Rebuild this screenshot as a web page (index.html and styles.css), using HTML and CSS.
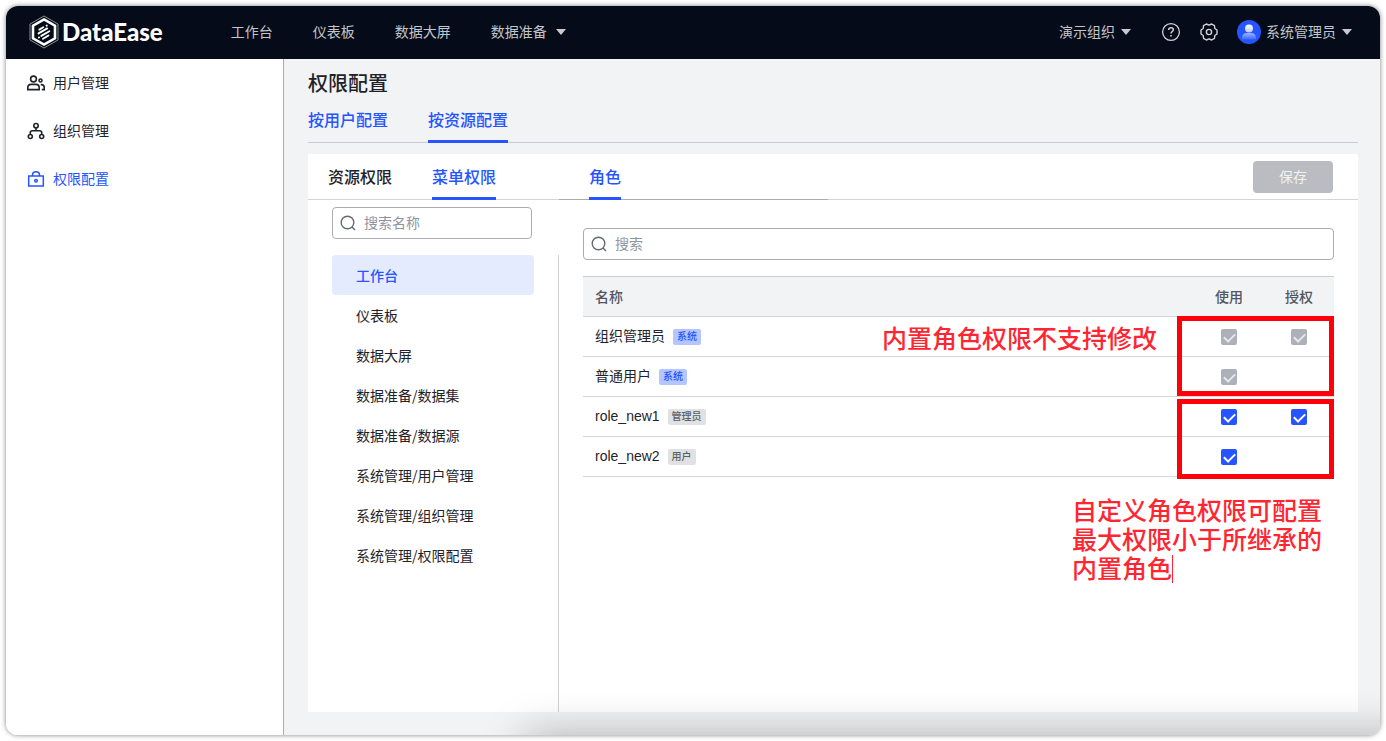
FILE: index.html
```html
<!DOCTYPE html>
<html lang="zh-CN">
<head>
<meta charset="utf-8">
<meta name="viewport" content="width=device-width, initial-scale=1">
<title>DataEase - 权限配置</title>
<link rel="stylesheet" href="styles.css">
</head>
<body>
<div class="window">
  <header class="topbar">
    <a class="logo" href="#">
      <svg width="30" height="34" viewBox="0 0 30 34" fill="none" aria-hidden="true">
        <path d="M15 1 29 9v16L15 33 1 25V9z" stroke="#8b8f98" stroke-width="1"/>
        <path d="M15 4.400 26 10.700v12.600L15 29.600 4 23.300V10.700z" stroke="#fff" stroke-width="2.600"/>
        <path d="m10.300 14.600 4-2.300M17.600 10.700l.2-.1M9.600 18.400l8.600-5M12.300 20.900l8-4.600M9.900 22.500l.2-.1M14 23.700l5.500-3.200" stroke="#fff" stroke-width="1.900" stroke-linecap="round"/>
      </svg>
      <span>DataEase</span>
    </a>
    <nav class="mainnav">
      <a href="#">工作台</a>
      <a href="#">仪表板</a>
      <a href="#">数据大屏</a>
      <a href="#">数据准备<i class="caret"></i></a>
    </nav>
    <div class="tools">
      <button class="org" type="button">演示组织<i class="caret"></i></button>
      <button class="tool" type="button" aria-label="帮助">
        <svg width="20" height="20" viewBox="0 0 20 20" fill="none" stroke="#d0d2d6" stroke-width="1.300">
          <circle cx="10" cy="10" r="8.400"/>
          <path d="M7.700 8c0-1.400 1-2.200 2.300-2.200s2.300.8 2.300 2c0 1.700-2.300 1.800-2.300 3.700" stroke-width="1.500"/>
          <path d="M10 12.900v1.500" stroke-width="1.600"/>
        </svg>
      </button>
      <button class="tool" type="button" aria-label="设置">
        <svg width="20" height="20" viewBox="0 0 20 20" fill="none" stroke="#d0d2d6" stroke-width="1.400" stroke-linejoin="round">
          <path d="M7.400 2 10 3.200 12.600 2l2.900 1.700.3 2.800L18 8v4l-2.200 1.500-.3 2.800-2.900 1.700-2.600-1.200L7.400 18l-2.900-1.700-.3-2.800L2 12V8l2.200-1.500.3-2.800z"/>
          <circle cx="10" cy="10" r="2.600"/>
        </svg>
      </button>
      <button class="user" type="button">
        <svg width="24" height="24" viewBox="0 0 24 24" aria-hidden="true">
          <defs>
            <linearGradient id="person" x1="0" y1="0" x2="0" y2="1"><stop offset="0" stop-color="#fff"/><stop offset="1" stop-color="#b9c8ff"/></linearGradient>
            <linearGradient id="body" x1="0" y1="0" x2="0" y2="1"><stop offset="0" stop-color="#9db3ff"/><stop offset="1" stop-color="#3d66ff"/></linearGradient>
          </defs>
          <circle cx="12" cy="12" r="12" fill="#2655ff"/>
          <path d="M5 19.500v-1.700c0-3 2-4.800 5-4.800h4c3 0 5 1.800 5 4.800v1.700z" fill="url(#body)"/>
          <circle cx="12" cy="8.500" r="4" fill="url(#person)"/>
        </svg>
        系统管理员<i class="caret"></i>
      </button>
    </div>
  </header>

  <div class="layout">
    <aside class="sidebar">
      <a href="#">
        <svg width="20" height="20" viewBox="0 0 20 20" fill="none" stroke="#1f2329" stroke-width="1.600">
          <circle cx="7.500" cy="6" r="2.900"/>
          <path d="M1.800 16.600v-1.800c0-2 1.400-3.400 3.400-3.400h4.600c2 0 3.400 1.400 3.400 3.400v1.800zM14.700 11.600h.7c1.700 0 2.800 1 2.800 2.800v2.200h-2.400"/>
          <circle cx="14.500" cy="7.500" r="1.500"/>
        </svg>
        用户管理
      </a>
      <a href="#">
        <svg width="20" height="20" viewBox="0 0 20 20" fill="none" stroke="#1f2329" stroke-width="1.600">
          <circle cx="10" cy="4.700" r="2.200"/>
          <circle cx="4.300" cy="15.500" r="2"/>
          <circle cx="15.700" cy="15.500" r="2"/>
          <path d="M10 7v2.800M4.300 13.500v-1.700c0-1.200.8-2 2-2h7.400c1.200 0 2 .8 2 2v1.700"/>
        </svg>
        组织管理
      </a>
      <a class="current" href="#">
        <svg width="20" height="20" viewBox="0 0 20 20" fill="none" stroke="#2655ff" stroke-width="1.500">
          <rect x="2.700" y="7" width="14.600" height="10"/>
          <path d="M6.500 7V6C6.500 4 8 2.700 10 2.700S13.500 4 13.500 6V7"/>
          <circle cx="10" cy="11.800" r="1.300"/>
        </svg>
        权限配置
      </a>
    </aside>

    <main class="content">
      <h1>权限配置</h1>
      <nav class="tabs page-tabs">
        <a href="#">按用户配置</a>
        <a class="active" href="#">按资源配置</a>
      </nav>

      <section class="panel">
        <div class="panel-head">
          <nav class="tabs kind-tabs">
            <a class="plain" href="#">资源权限</a>
            <a class="active" href="#">菜单权限</a>
          </nav>
          <nav class="tabs role-tabs">
            <a class="active" href="#">角色</a>
          </nav>
          <button class="save" type="button" disabled>保存</button>
        </div>

        <div class="panel-body">
          <div class="resources">
            <label class="search">
              <svg width="18" height="18" viewBox="0 0 18 18" fill="none" stroke="#646a73" stroke-width="1.400"><circle cx="8.500" cy="8.500" r="6.300"/><path d="m13 13 3 3"/></svg>
              <input type="text" placeholder="搜索名称" aria-label="搜索名称">
            </label>
            <ul class="menu-list">
              <li class="selected">工作台</li>
              <li>仪表板</li>
              <li>数据大屏</li>
              <li>数据准备/数据集</li>
              <li>数据准备/数据源</li>
              <li>系统管理/用户管理</li>
              <li>系统管理/组织管理</li>
              <li>系统管理/权限配置</li>
            </ul>
          </div>

          <div class="roles">
            <label class="search">
              <svg width="18" height="18" viewBox="0 0 18 18" fill="none" stroke="#646a73" stroke-width="1.400"><circle cx="8.500" cy="8.500" r="6.300"/><path d="m13 13 3 3"/></svg>
              <input type="text" placeholder="搜索" aria-label="搜索">
            </label>
            <div class="table-area">
              <table>
                <thead>
                  <tr><th>名称</th><th class="check">使用</th><th class="check">授权</th></tr>
                </thead>
                <tbody>
                  <tr>
                    <td>组织管理员<span class="tag">系统</span></td>
                    <td class="check"><input type="checkbox" aria-label="组织管理员 使用" checked disabled></td>
                    <td class="check"><input type="checkbox" aria-label="组织管理员 授权" checked disabled></td>
                  </tr>
                  <tr>
                    <td>普通用户<span class="tag">系统</span></td>
                    <td class="check"><input type="checkbox" aria-label="普通用户 使用" checked disabled></td>
                    <td class="check"></td>
                  </tr>
                  <tr>
                    <td>role_new1<span class="tag custom">管理员</span></td>
                    <td class="check"><input type="checkbox" aria-label="role_new1 使用" checked></td>
                    <td class="check"><input type="checkbox" aria-label="role_new1 授权" checked></td>
                  </tr>
                  <tr>
                    <td>role_new2<span class="tag custom">用户</span></td>
                    <td class="check"><input type="checkbox" aria-label="role_new2 使用" checked></td>
                    <td class="check"></td>
                  </tr>
                </tbody>
              </table>
              <div class="mark mark-builtin"></div>
              <div class="mark mark-custom"></div>
              <p class="note note-builtin">内置角色权限不支持修改</p>
              <p class="note note-custom">自定义角色权限可配置<br>最大权限小于所继承的<br>内置角色<span class="cursor"></span></p>
            </div>
          </div>
        </div>
      </section>
    </main>
  </div>
</div>
</body>
</html>
```

FILE: styles.css
```css
* {
  box-sizing: border-box;
}

body {
  position: relative;
  margin: 0;
  padding: 6px;
  height: 100vh;
  background: #fff;
  color: #1f2329;
  font: 14px/22px "Liberation Sans", "Noto Sans CJK SC", sans-serif;
}

body::before {
  content: "";
  position: absolute;
  inset: 6px;
  border-radius: 12px;
  box-shadow: 0 0 5px rgba(0, 0, 0, 0.5);
}

a {
  color: inherit;
  text-decoration: none;
}

button {
  padding: 0;
  border: 0;
  background: none;
  color: inherit;
  font: inherit;
}

svg {
  display: block;
  flex: none;
}

.window {
  position: relative;
  display: flex;
  flex-direction: column;
  height: calc(100vh - 12px);
  border-radius: 12px;
  overflow: hidden;
  background: #f2f3f5;
}

/* soft shade along the bottom edge */
.window::after {
  content: "";
  position: absolute;
  left: 520px;
  right: -60px;
  top: 100%;
  height: 60px;
  box-shadow: 0 0 44px rgba(0, 0, 0, 0.28);
  pointer-events: none;
}

.topbar {
  display: flex;
  align-items: center;
  flex: none;
  height: 53px;
  padding: 0 28px 2px 23px;
  background: #050b18;
  color: #c2c5ca;
}

.logo {
  display: flex;
  align-items: center;
  gap: 3px;
  color: #fff;
  font: 900 24px/30px Lato, sans-serif;
}

.mainnav {
  display: flex;
  gap: 40px;
  margin-left: 68px;
}

.mainnav a,
.org,
.user {
  display: flex;
  align-items: center;
}

.caret {
  margin-left: 6px;
  border: 5px solid transparent;
  border-top: 6px solid #c8cacf;
  border-bottom: 0;
}

.mainnav .caret {
  margin-left: 9px;
}

.tools {
  display: flex;
  align-items: center;
  margin-left: auto;
}

.org {
  margin-right: 30px;
}

.tool {
  margin-right: 18px;
}

.user svg {
  margin-right: 5px;
}

.layout {
  display: flex;
  flex: 1;
  min-height: 0;
}

.sidebar {
  flex: none;
  width: 278px;
  border-right: 1px solid #a9acb3;
  background: #fff;
}

.sidebar a {
  display: flex;
  align-items: center;
  gap: 7px;
  height: 48px;
  padding-left: 20px;
}

.sidebar .current {
  color: #2655ff;
}

.content {
  display: flex;
  flex: 1;
  flex-direction: column;
  min-width: 0;
  padding: 12px 22px 23px 24px;
}

h1 {
  margin: 0;
  font-size: 20px;
  font-weight: 500;
  line-height: 26px;
}

.tabs {
  display: flex;
  gap: 40px;
  color: #2655ff;
  font-size: 16px;
  font-weight: 500;
}

.tabs a {
  display: block;
  padding-top: 2px;
  line-height: 44px;
}

.tabs .plain {
  color: #1f2329;
}

.tabs .active {
  box-shadow: inset 0 -3px #2655ff;
}

.page-tabs {
  box-shadow: inset 0 -1px #c9cbd0;
}

.panel {
  display: flex;
  flex: 1;
  flex-direction: column;
  margin-top: 11px;
  background: #fff;
}

.panel-head {
  display: flex;
  box-shadow: inset 0 -1px #d3d5d8;
}

.kind-tabs {
  flex: none;
  width: 251px;
  padding-left: 20px;
}

.role-tabs {
  width: 269px;
  padding-left: 30px;
  box-shadow: inset 0 -1px #a9acb0;
}

.save {
  width: 80px;
  height: 32px;
  margin: 7px 25px 0 auto;
  border-radius: 4px;
  background: #bbbcc1;
  color: #f0f1f2;
}

.panel-body {
  display: flex;
  flex: 1;
}

.resources {
  display: flex;
  flex: none;
  flex-direction: column;
  width: 251px;
  padding-top: 7px;
}

.search {
  display: flex;
  align-items: center;
  gap: 7px;
  height: 32px;
  padding-left: 6px;
  border: 1px solid #a9acb3;
  border-radius: 4px;
}

.search input {
  flex: 1;
  min-width: 0;
  padding: 0;
  border: 0;
  outline: 0;
  background: none;
  font: inherit;
}

.search input::placeholder {
  color: #8f959e;
}

.resources .search {
  width: 200px;
  margin-left: 24px;
}

.menu-list {
  flex: 1;
  margin: 16px 0 0;
  padding: 0 24px;
  border-right: 1px solid #d0d2d5;
  font-family: "Noto Sans CJK SC", sans-serif;
  list-style: none;
}

.menu-list li {
  padding-left: 24px;
  line-height: 40px;
}

.menu-list .selected {
  border-radius: 4px;
  background: #e5ebff;
  color: #2655ff;
  font-weight: 500;
}

.roles {
  flex: 1;
  min-width: 0;
  padding: 28px 24px 0;
}

.table-area {
  position: relative;
  margin-top: 16px;
}

table {
  width: 100%;
  border-top: 1px solid #cccfd0;
  border-spacing: 0;
  table-layout: fixed;
}

th,
td {
  height: 40px;
  padding: 0 12px;
  border-bottom: 1px solid #d3d5d7;
  text-align: left;
}

td {
  padding-bottom: 2px;
}

th {
  background: #f2f3f5;
  color: #51565e;
  font-weight: 500;
}

.check {
  width: 70px;
  padding: 0;
  text-align: center;
}

.tag {
  display: inline-block;
  margin-left: 8px;
  padding: 0 4px;
  border-radius: 2px;
  background: #b4c5ff;
  color: #2655ff;
  font-size: 10px;
  font-weight: 500;
  line-height: 16px;
  vertical-align: 1px;
}

.tag.custom {
  background: #dfe1e2;
  color: #5b6068;
}

.check input {
  display: block;
  width: 16px;
  height: 16px;
  margin: 0 auto;
  border-radius: 2px;
  appearance: none;
  background: #2655ff;
}

.check input::before {
  content: "";
  display: block;
  width: 9px;
  height: 5px;
  margin: 0 auto;
  border: solid #fff;
  border-width: 0 0 2px 2px;
  transform: translateY(4px) rotate(-45deg);
}

.check input:disabled {
  background: #acb0b8;
}

.check input:disabled::before {
  border-color: #e6e7ea;
}

.mark {
  position: absolute;
  right: 0;
  width: 157px;
  height: 80px;
  border: 5px solid #ff0008;
}

.mark-builtin {
  top: 40px;
}

.mark-custom {
  top: 123px;
}

.note {
  position: absolute;
  margin: 0;
  color: #ff2632;
  font-size: 25px;
  font-weight: 500;
  line-height: 29px;
  white-space: nowrap;
}

.note-builtin {
  top: 49px;
  right: 177px;
}

.note-custom {
  top: 221px;
  right: 12px;
}

.cursor {
  display: inline-block;
  width: 1px;
  height: 28px;
  margin-top: -4px;
  background: #ff2632;
  vertical-align: -5px;
}
```
